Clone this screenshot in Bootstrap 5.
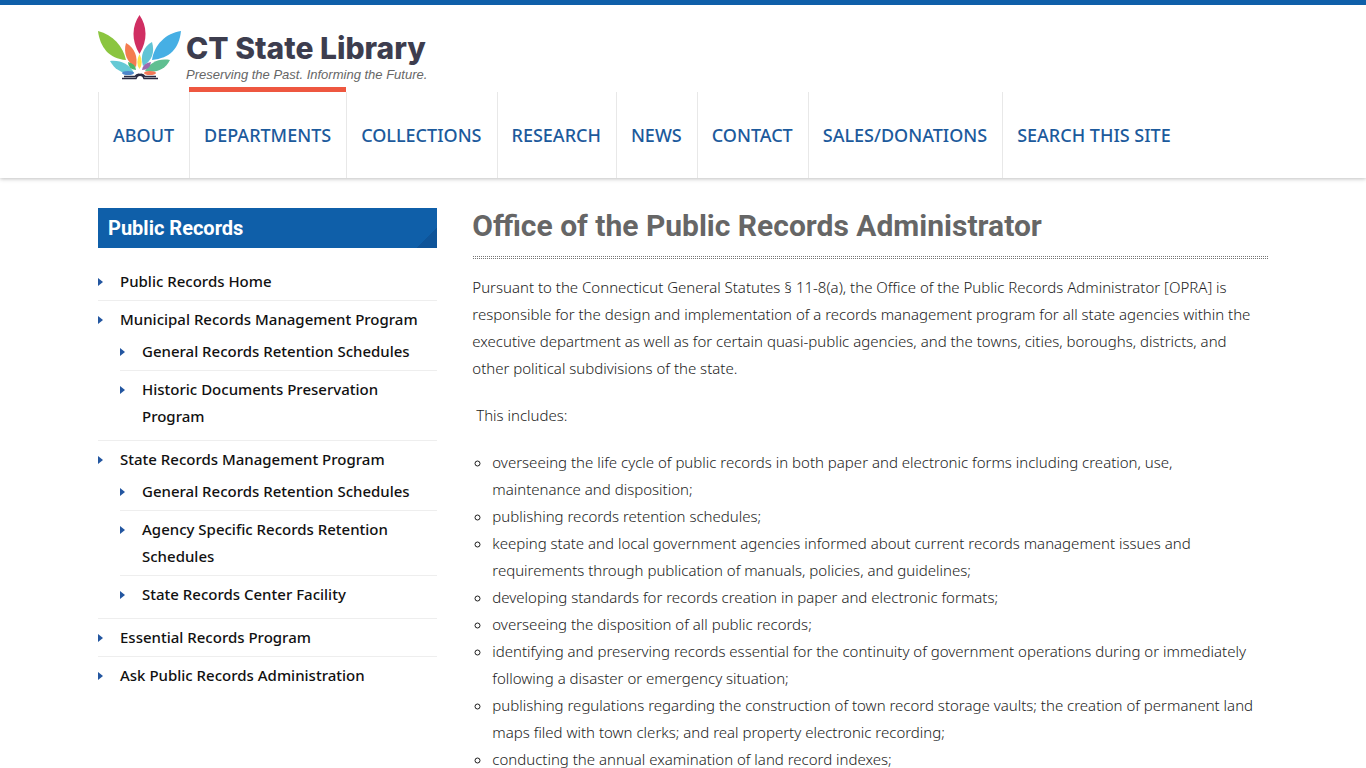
<!DOCTYPE html>
<html lang="en">
<head>
<meta charset="utf-8">
<meta name="viewport" content="width=device-width, initial-scale=1">
<title>Office of the Public Records Administrator - CT State Library</title>
<link href="https://cdn.jsdelivr.net/npm/bootstrap@5.3.0/dist/css/bootstrap.min.css" rel="stylesheet">
<style>
  body { font-family: "Noto Sans", "Open Sans", sans-serif; font-size: 15px; line-height: 27px; color: #1c1c1c; }
  .site-wrap { max-width: 1170px; }
  .site-header { border-top: 5px solid #0f5fa9; box-shadow: 0 1px 4px rgba(0,0,0,.25); }
  .brand { padding: 10px 0 7px; gap: 4px; color: #3d3d4e; }
  .brand-name { font: 800 30px/33px Inter, sans-serif; margin-top: 17px; }
  .brand-tag { font: italic 13px/20px "Liberation Sans", sans-serif; color: #666; }
  .main-menu .nav-link { border-left: 1px solid #e8e8e8; padding: 30px 15px 29px 14px; font-size: 18px; line-height: 27px; font-weight: 500; color: #1c5a9c; }
  .main-menu .nav-link.active { position: relative; }
  .main-menu .nav-link.active::before { content: ""; position: absolute; left: -1px; right: 0; top: -5px; height: 5px; background: #ee5740; }
  .content-row { padding-top: 30px; column-gap: 35px; }
  @media (min-width: 992px) { .side-col { width: 29%; } }
  .side-title { font: 700 20px/40px Roboto, sans-serif; padding-left: 10px; margin-bottom: 15px; color: #fff; background: linear-gradient(135deg, transparent 50%, #0e5499 50%) right bottom / 20px 20px no-repeat #0f5fa9; }
  .side-menu li { border-top: 1px solid #eee; padding: 5px 0; }
  .side-menu li:first-child { border-top: 0; }
  .side-menu li a { display: flex; padding: 0; gap: 17px; color: #111; font-weight: 500; text-decoration: none; }
  .side-menu li a::before { content: ""; flex: none; margin-top: 10px; width: 5px; height: 8px; background: #2356a0; clip-path: polygon(0 0, 100% 50%, 0 100%); }
  .side-menu ul { padding-left: 22px; }
  .page-title { font: 700 30px/36px Roboto, sans-serif; color: #666; padding-bottom: 12px; }
  .dotted-rule { height: 3px; background: conic-gradient(#777 25%, transparent 0) 0 0 / 2px 2px; }
  .copy { font-weight: 300; padding: 15px 6px 0 0; }
  .copy p { margin-bottom: 20px; }
  .copy ul { list-style: circle; padding-left: 20px; }
</style>
</head>
<body>
<header class="site-header">
  <div class="container site-wrap px-0">
    <a href="#" class="brand d-flex text-decoration-none">
      <svg width="84" height="67" viewBox="0 0 84 67" aria-hidden="true">
        <path d="M41.500 0C34 11 33 25 41.500 39C50 25 49 11 41.500 0" fill="#d02e62"/>
        <path d="M0 16C2 32 11 44 28 45C25 31 15 20 0 16" fill="#8bc53f"/>
        <path d="M83 16C68 18 56 30 54 45C72 43 81 34 83 16" fill="#46afe4"/>
        <path d="M28 28C25 38 29 48 38 52C40 42 37 33 28 28" fill="#f47b50"/>
        <path d="M54 27C45 32 42 41 45 51C54 46 57 37 54 27" fill="#61c4d5"/>
        <path d="M12 46C17 55 24 59 36 58C31 49 23 45 12 46" fill="#65c9d5"/>
        <path d="M72 45C60 43 52 48 47 56C58 58 67 55 72 45" fill="#5fbf91"/>
        <path d="M30 47Q30 54 38 55Q38 49 30 47" fill="#4bb56b"/>
        <path d="M53 47Q45 48 44 55Q52 55 53 47" fill="#9b69ad"/>
        <path d="M41.500 39Q37 48 41.500 54Q46 48 41.500 39" fill="#fee34f"/>
        <ellipse cx="30" cy="58" rx="6" ry="2" fill="#4e87cb"/>
        <ellipse cx="52" cy="58" rx="6" ry="2" fill="#f37958"/>
        <path d="M24 63.500H38L39 61.500Q42 59 45 61.500L46 63.500H60M26 61.500H37Q39 58.500 42 59.500Q45 58.500 47 61.500H58" fill="none" stroke="#282a42" stroke-width="1.500"/>
      </svg>
      <span class="d-flex flex-column">
        <span class="brand-name">CT State Library</span>
        <span class="brand-tag">Preserving the Past. Informing the Future.</span>
      </span>
    </a>
    <nav class="nav main-menu" aria-label="Main">
      <a class="nav-link" href="#">ABOUT</a>
      <a class="nav-link active" href="#" aria-current="true">DEPARTMENTS</a>
      <a class="nav-link" href="#">COLLECTIONS</a>
      <a class="nav-link" href="#">RESEARCH</a>
      <a class="nav-link" href="#">NEWS</a>
      <a class="nav-link" href="#">CONTACT</a>
      <a class="nav-link" href="#">SALES/DONATIONS</a>
      <a class="nav-link" href="#">SEARCH THIS SITE</a>
    </nav>
  </div>
</header>
<div class="container site-wrap px-0">
  <div class="row g-0 content-row">
    <aside class="col-12 col-lg-auto side-col">
      <h2 class="side-title">Public Records</h2>
      <ul class="side-menu list-unstyled mb-0">
        <li><a href="#">Public Records Home</a></li>
        <li><a href="#">Municipal Records Management Program</a>
          <ul class="list-unstyled">
            <li><a href="#">General Records Retention Schedules</a></li>
            <li><a href="#">Historic Documents Preservation Program</a></li>
          </ul>
        </li>
        <li><a href="#">State Records Management Program</a>
          <ul class="list-unstyled">
            <li><a href="#">General Records Retention Schedules</a></li>
            <li><a href="#">Agency Specific Records Retention Schedules</a></li>
            <li><a href="#">State Records Center Facility</a></li>
          </ul>
        </li>
        <li><a href="#">Essential Records Program</a></li>
        <li><a href="#">Ask Public Records Administration</a></li>
      </ul>
    </aside>
    <main class="col-12 col-lg">
      <h1 class="page-title mb-0">Office of the Public Records Administrator</h1>
      <div class="dotted-rule"></div>
      <div class="copy">
        <p>Pursuant to the Connecticut General Statutes § 11-8(a), the Office of the Public Records Administrator [OPRA] is responsible for the design and implementation of a records management program for all state agencies within the executive department as well as for certain quasi-public agencies, and the towns, cities, boroughs, districts, and other political subdivisions of the state.</p>
        <p>&nbsp;This includes:</p>
        <ul>
          <li>overseeing the life cycle of public records in both paper and electronic forms including creation, use, maintenance and disposition;</li>
          <li>publishing records retention schedules;</li>
          <li>keeping state and local government agencies informed about current records management issues and requirements through publication of manuals, policies, and guidelines;</li>
          <li>developing standards for records creation in paper and electronic formats;</li>
          <li>overseeing the disposition of all public records;</li>
          <li>identifying and preserving records essential for the continuity of government operations during or immediately following a disaster or emergency situation;</li>
          <li>publishing regulations regarding the construction of town record storage vaults; the creation of permanent land maps filed with town clerks; and real property electronic recording;</li>
          <li>conducting the annual examination of land record indexes;</li>
        </ul>
      </div>
    </main>
  </div>
</div>
<script src="https://cdn.jsdelivr.net/npm/bootstrap@5.3.0/dist/js/bootstrap.bundle.min.js"></script>
</body>
</html>
